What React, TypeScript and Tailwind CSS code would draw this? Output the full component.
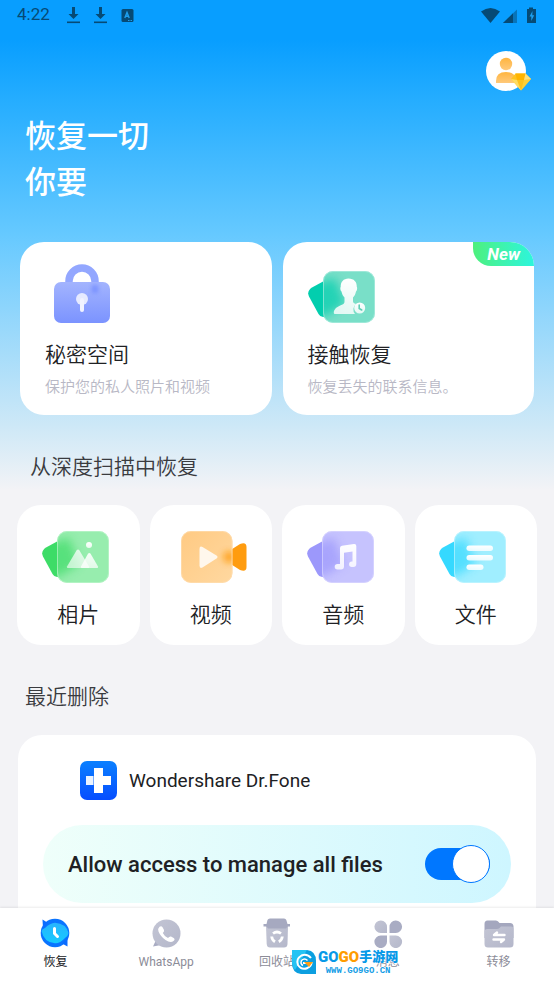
import type { ReactNode } from "react"

type PlateProps = {
  id: string
  back: string
  front: string
  edge: string
  children: ReactNode
}

function PlateIcon({ id, back, front, edge, children }: PlateProps) {
  const shape = "M16 10 L4 16.5 Q-1.5 20 1 25.5 L10.500 43 Q12.500 46.500 16 46 L37 33 L27 7 Z"
  return (
    <svg width="73" height="52" viewBox="0 0 73 52" aria-hidden="true">
      <defs>
        <clipPath id={`${id}-clip`}>
          <rect x="15" width="52" height="52" rx="10" />
        </clipPath>
        <filter id={`${id}-blur`} x="-50%" y="-50%" width="200%" height="200%">
          <feGaussianBlur stdDeviation="5" />
        </filter>
        <linearGradient id={`${id}-glyph`} x1="0" y1="0" x2="0" y2="1">
          <stop offset="0" stopColor="#fff" />
          <stop offset="1" stopColor="#fff" stopOpacity="0.8" />
        </linearGradient>
      </defs>
      <path d={shape} fill={back} />
      <g clipPath={`url(#${id}-clip)`}>
        <rect x="15" width="52" height="52" fill={front} />
        <path d={shape} fill={back} opacity="0.7" filter={`url(#${id}-blur)`} />
      </g>
      <rect x="15.500" y="0.500" width="51" height="51" rx="9.500" fill="none" stroke={edge} strokeOpacity="0.6" />
      <g fill={`url(#${id}-glyph)`}>{children}</g>
    </svg>
  )
}

function LockIcon() {
  return (
    <svg width="67" height="59" viewBox="-9 0 67 59" aria-hidden="true">
      <defs>
        <linearGradient id="lock-body" x1="0" y1="0" x2="0" y2="1">
          <stop offset="0" stopColor="#a3b4fe" />
          <stop offset="1" stopColor="#7b93ff" />
        </linearGradient>
        <filter id="lock-blur" x="-10" y="10" width="70" height="40" filterUnits="userSpaceOnUse">
          <feGaussianBlur stdDeviation="2" />
        </filter>
      </defs>
      <path d="M15 24 V17 a13 13 0 0 1 26 0 V24" fill="none" stroke="#93a7ff" strokeWidth="7.500" />
      <rect y="18" width="56" height="41" rx="7" fill="url(#lock-body)" />
      <path d="M41 21 v8" stroke="#6f89ff" strokeWidth="6" opacity="0.8" filter="url(#lock-blur)" />
      <circle cx="28" cy="35" r="6" fill="#e6eaff" />
      <path d="M28 36 V46" stroke="#f1f3ff" strokeWidth="4" strokeLinecap="round" />
    </svg>
  )
}

function ContactIcon() {
  return (
    <PlateIcon id="contact" back="#02ceae" front="#79dfc8" edge="#b5efe3">
      <path d="M40.500 7.500 c5.500 0 8.500 3.500 8.300 8.500 c.6 .3 .5 3.500 -.8 4.500 c-.5 2.500 -1.500 4.500 -3 6 v4 c.3 1.500 1.500 2 3 2.500 a7 7 0 0 0 -1 10 H27 c-1.500 0 -1.500 -2.500 -.5 -4 c1.500 -3 5 -4 8 -5.500 c1.500 -.8 2 -1.500 2 -3 v-4 c-1.500 -1.500 -2.500 -3.500 -3 -6 c-1.300 -1 -1.400 -4.200 -.8 -4.500 c-.2 -5 2.800 -8.500 7.800 -8.500 Z" />
      <circle cx="51.700" cy="37" r="5.500" />
      <path d="M51.200 34 v3.500 l2.500 1.500" fill="none" stroke="#5fcdb4" strokeWidth="1.600" strokeLinecap="round" />
    </PlateIcon>
  )
}

function PhotoIcon() {
  return (
    <PlateIcon id="photo" back="#3ddc67" front="#97edae" edge="#c4f7d0">
      <path d="M34.500 19.500 q1.500 -2 3 0 l9.500 16 q.5 1.500 -1 1.500 H26 q-1.500 0 -1 -1.500 Z" opacity="0.75" />
      <path d="M46 22.800 q1.300 -1.800 2.600 0 L56 35.500 q.5 1.500 -1 1.500 H40 q-1.500 0 -1 -1.500 Z" opacity="0.9" />
      <circle cx="47" cy="14" r="3" />
    </PlateIcon>
  )
}

function VideoIcon() {
  return (
    <svg width="75" height="52" viewBox="-8 0 75 52" aria-hidden="true">
      <defs>
        <linearGradient id="video-front" x1="0" y1="0" x2="1" y2="1">
          <stop offset="0" stopColor="#ffca83" />
          <stop offset="1" stopColor="#ffd8a0" />
        </linearGradient>
        <clipPath id="video-clip">
          <rect width="51.500" height="52" rx="10" />
        </clipPath>
        <filter id="video-blur" x="-50%" y="-50%" width="200%" height="200%">
          <feGaussianBlur stdDeviation="3" />
        </filter>
      </defs>
      <path d="M45 22 L59 13 Q65.500 10.500 65.500 16 V36 Q65.500 41.500 59 39 L45 30 Z" fill="#ff9c0f" />
      <g clipPath="url(#video-clip)">
        <rect width="52" height="52" fill="url(#video-front)" />
        <circle cx="48" cy="26" r="6" fill="#ff9c0f" opacity="0.8" filter="url(#video-blur)" />
      </g>
      <rect x="0.500" y="0.500" width="50.500" height="51" rx="9.500" fill="none" stroke="#ffe0b5" strokeOpacity="0.6" />
      <path d="M18.500 18 Q18.500 14.500 21.500 16 L35.500 24.500 Q37.500 26 35.500 27.500 L21.500 36.500 Q18.500 38 18.500 34.500 Z" fill="#fff7ec" />
    </svg>
  )
}

function MusicIcon() {
  return (
    <PlateIcon id="music" back="#9c98fb" front="#c6c3fe" edge="#dddbff">
      <path d="M33 17 q0 -2 2 -2.300 l12 -1.700 q2.300 -.2 2.300 2 V33 q0 3 -3 3 h-1.500 a2.700 2.700 0 0 1 0 -5.400 H45.500 V20.500 L37 21.800 V35.500 q0 3 -3 3 h-3.500 a2.800 2.800 0 0 1 0 -5.600 H33 Z" />
    </PlateIcon>
  )
}

function FileIcon() {
  return (
    <PlateIcon id="file" back="#35d9ff" front="#a0eeff" edge="#c9f6ff">
      <rect x="27.500" y="14.500" width="26.500" height="5.500" rx="2.700" />
      <rect x="27.500" y="24" width="26.500" height="5.500" rx="2.700" />
      <rect x="27.500" y="33.500" width="17" height="5.500" rx="2.700" />
    </PlateIcon>
  )
}

function DownloadGlyph() {
  return (
    <svg width="13" height="17" viewBox="0 0 13 17" fill="#064a75" aria-hidden="true">
      <path d="M5 0 h3 v7 h3.500 L6.500 12 L1.500 7 H5 Z" />
      <rect y="14.500" width="13" height="1.600" />
    </svg>
  )
}

function StatusBar() {
  return (
    <div className="flex h-8 items-center justify-between pr-[18px] pb-[2px] pl-[17px] text-[#064a75]">
      <div className="flex items-center gap-[17px]">
        <span className="text-[17px]">4:22</span>
        <div className="flex items-center gap-[14px]">
          <DownloadGlyph />
          <DownloadGlyph />
          <svg width="13" height="13" viewBox="0 0 13 13" aria-hidden="true">
            <rect x="0.500" width="12" height="13" rx="1.500" fill="#064a75" />
            <path d="M3.800 9 L6 3.500 L8.200 9 M4.500 7.300 h3" fill="none" stroke="#1d9fee" strokeWidth="1.400" />
            <path d="M7 11.500 h4" stroke="#1d9fee" strokeDasharray="1 .5" />
          </svg>
        </div>
      </div>
      <svg width="55" height="17" viewBox="0 0 55 17" fill="#064a75" aria-hidden="true">
        <path d="M0 4.500 Q9.500 -2.500 19 4.500 L9.500 16 Z" />
        <path d="M22 16 L36 2.500 V16 Z" opacity="0.5" />
        <path d="M22 16 L32 6.300 V16 Z" />
        <path d="M48 .5 h4 v1.500 h3 V16 h-9 V2 h2 Z" />
        <path d="M51.500 4 L48.500 9.500 h1.800 V14 L53.200 8.200 h-1.900 Z" fill="#1d9fee" />
      </svg>
    </div>
  )
}

function Avatar() {
  return (
    <svg width="45" height="40" viewBox="0 0 45 40" aria-hidden="true">
      <defs>
        <linearGradient id="person" x1="0" y1="0" x2="0" y2="1">
          <stop offset="0" stopColor="#ffb53f" />
          <stop offset="1" stopColor="#ffc97a" />
        </linearGradient>
      </defs>
      <circle cx="20" cy="20" r="20" fill="#fff" />
      <circle cx="20" cy="13" r="6.200" fill="url(#person)" />
      <path d="M10 32 v-2 q0 -9 10 -9 q10 0 10 9 v2 Z" fill="url(#person)" />
      <path d="M29.500 22.500 h10 L45 28 L35 39.500 L25 28 Z" fill="#ffc21e" />
      <path d="M29.500 22.500 h10 L38 29 h-7 Z" fill="#ffb400" />
      <path d="M25 28 L31 29 L35 39.500 Z" fill="#ffdc63" />
      <path d="M45 28 L38 29 L35 39.500 Z" fill="#ffd03a" />
      <path d="M39.500 22.500 L45 28 L38 29 Z" fill="#ffe07a" />
    </svg>
  )
}

function NavGradient({ id }: { id: string }) {
  return (
    <linearGradient id={id} x1="0" y1="0" x2="1" y2="1">
      <stop offset="0" stopColor="#c3c5d4" />
      <stop offset="1" stopColor="#b4b7ca" />
    </linearGradient>
  )
}

function RestoreNavIcon() {
  return (
    <svg width="30" height="30" viewBox="0 0 30 30" aria-hidden="true">
      <defs>
        <linearGradient id="restore" x1="0" y1="0" x2="0" y2="1">
          <stop offset="0" stopColor="#27b4fd" />
          <stop offset="1" stopColor="#16cbff" />
        </linearGradient>
      </defs>
      <circle cx="15" cy="15" r="14.300" fill="#0a74ff" />
      <path d="M2.500 1.500 L8 5 L3 11 Z" fill="#0a6cff" />
      <path d="M27.500 28.500 L22 25.500 L27.500 19 Z" fill="#0a6cff" />
      <path d="M1.500 13 Q2 11 5 10 Q10 5 15 4.800 Q26 5.500 28.500 15 Q28.300 17.500 25 20 Q20 25.500 15 25.300 Q4 24.500 1.500 13 Z" fill="url(#restore)" />
      <path d="M14.500 10.500 V15.500 L17.500 18.500" fill="none" stroke="#fff" strokeWidth="3" strokeLinecap="round" />
    </svg>
  )
}

function WhatsAppNavIcon() {
  return (
    <svg width="30" height="30" viewBox="0 0 30 30" aria-hidden="true">
      <defs>
        <NavGradient id="wa" />
      </defs>
      <path d="M2 28.500 L5 22 L10 27 Z" fill="#a9acc3" />
      <circle cx="15.500" cy="15.500" r="14" fill="url(#wa)" />
      <path d="M8.500 8.800 Q10.500 7.500 11.700 9.500 L13 12 Q13.500 13.500 11.800 15 Q13.500 18.500 17 20 Q18.500 18 20 18.500 L22.700 20 Q24.500 21.500 22.500 23 Q19.500 25.300 14.500 22 Q9.500 18.500 7.500 13.500 Q6.500 10.500 8.500 8.800 Z" fill="#fff" />
    </svg>
  )
}

function TrashNavIcon() {
  return (
    <svg width="30" height="30" viewBox="0 0 30 30" aria-hidden="true">
      <defs>
        <NavGradient id="trash" />
      </defs>
      <path d="M4 8 H26 L25.500 26 Q25.300 29.500 22 29.500 H8 Q5 29.500 4.700 26 Z" fill="url(#trash)" />
      <path d="M4.500 6 L5.500 2 Q6 .5 8 .5 H22 Q23.800 .5 24.300 2 L25.500 6 H28 V8.500 H25.500 L24 10.500 H6 L4.500 8.500 H1.500 V6 Z" fill="#a6a9c0" />
      <path d="M11 15.500 Q15 12.500 19 15.500 M20.300 18.500 Q20 22 16.800 23.800 M9.700 18.500 Q10 22 13 23.800" fill="none" stroke="#fff" strokeWidth="2.800" />
    </svg>
  )
}

function AppsNavIcon() {
  return (
    <svg width="30" height="30" viewBox="0 0 30 30" fill="url(#apps)" aria-hidden="true">
      <defs>
        <NavGradient id="apps" />
      </defs>
      <path d="M14 15 V9 a6.300 6.300 0 1 0 -6.300 6 Z" />
      <path d="M16.500 15 V9 a6.300 6.300 0 1 1 6.300 6 Z" fill="#a9acc3" />
      <path d="M14 17.500 V23.500 a6.300 6.300 0 1 1 -6.300 -6 Z" fill="#a9acc3" />
      <path d="M16.500 17.500 V23.500 a6.300 6.300 0 1 0 6.300 -6 Z" />
    </svg>
  )
}

function TransferNavIcon() {
  return (
    <svg width="30" height="30" viewBox="0 0 30 30" aria-hidden="true">
      <defs>
        <NavGradient id="transfer" />
      </defs>
      <path d="M.5 6 Q.5 2.500 3.500 2.500 H12 Q14 2.500 15.500 5 H26 Q29 5 29.500 8 V20 H.5 Z" fill="#a4a7be" />
      <path d="M.5 13.500 Q.5 11 3.500 11 H13 Q15 11 17 8.500 H27 Q29.500 8.500 29.500 11 V26 Q29.500 29.500 26 29.500 H4 Q.5 29.500 .5 26 Z" fill="url(#transfer)" />
      <path d="M10 17 H20.500 M10.500 16.500 L13 14.500 M20 21.500 H9.500 M19.500 22 L17 24" fill="none" stroke="#fff" strokeWidth="2.400" strokeLinecap="round" />
    </svg>
  )
}

const features = [
  { title: "秘密空间", description: "保护您的私人照片和视频", icon: <LockIcon />, isNew: false },
  { title: "接触恢复", description: "恢复丢失的联系信息。", icon: <ContactIcon />, isNew: true },
]

const scans = [
  { label: "相片", icon: <PhotoIcon /> },
  { label: "视频", icon: <VideoIcon /> },
  { label: "音频", icon: <MusicIcon /> },
  { label: "文件", icon: <FileIcon /> },
]

const tabs = [
  { label: "恢复", icon: <RestoreNavIcon />, active: true },
  { label: "WhatsApp", icon: <WhatsAppNavIcon />, active: false },
  { label: "回收站", icon: <TrashNavIcon />, active: false },
  { label: "消息", icon: <AppsNavIcon />, active: false },
  { label: "转移", icon: <TransferNavIcon />, active: false },
]

function Watermark() {
  return (
    <div className="pointer-events-none absolute top-10 left-1/2 ml-[15px] flex items-center gap-[2px]">
      <svg width="24" height="24" viewBox="0 0 24 24" aria-hidden="true">
        <path d="M0 0 H15 Q24 1 24 11 V24 H9 Q0 23 0 13 Z" fill="#0c9fe0" />
        <path d="M0 0 H15 L3 20 Q0 17 0 13 Z" fill="#25c3f3" />
        <path d="M19 8 Q15 3 9.500 5.500 Q3.500 9 6 15 Q9.500 20.500 15.500 18 Q19 16 19.500 13 H11" fill="none" stroke="#fff" strokeWidth="2" />
        <path d="M15.500 10.500 Q12.500 7.500 9.500 10.500 Q8 14 11 15.500" fill="none" stroke="#fff" strokeWidth="1.500" />
        <path d="M12 12 H21 L17 17 Z" fill="#ff9d14" />
      </svg>
      <div className="flex flex-col items-center font-bold [text-shadow:0_0_2px_#fff,0_0_2px_#fff]">
        <span className="flex items-center leading-[18px] font-black whitespace-nowrap text-[#0799e8]">
          <span className="text-[15px]">GO</span>
          <span className="text-[15px] text-[#ff9c00]">GO</span>
          <span className="text-[13px]">手游网</span>
        </span>
        <span className="font-['Liberation_Mono',monospace] text-[9px] leading-[10px] text-[#169ee6]">WWW.GO9GO.CN</span>
      </div>
    </div>
  )
}

export default function App() {
  return (
    <div className="flex h-screen flex-col overflow-hidden bg-[#f3f3f6] font-[Roboto,'Noto_Sans_CJK_SC',sans-serif] text-[#202124]">
      <main className="min-h-0 flex-1 overflow-hidden bg-[linear-gradient(to_bottom,#089eff_0px,#089eff_40px,#25adff_100px,#66c9ff_235px,#cde8f7_425px,#f3f3f6_490px)]">
        <StatusBar />
        <header className="pr-[23px] pl-[25px]">
          <div className="flex justify-end pt-[19px]">
            <button type="button" aria-label="Account">
              <Avatar />
            </button>
          </div>
          <h1 className="mt-[23px] text-[31px] leading-[46px] font-medium text-white">
            恢复一切
            <br />
            你要
          </h1>
        </header>

        <div className="mt-9 grid grid-cols-2 gap-[11px] px-5">
          {features.map((item) => (
            <button
              key={item.title}
              type="button"
              className="relative overflow-hidden rounded-[24px] bg-white px-[25px] pt-[22px] pb-4 text-left"
            >
              <span className="flex h-[59px] items-end">{item.icon}</span>
              <span className="mt-4 block text-[21px] leading-8 font-[350]">{item.title}</span>
              <span className="mt-1 block text-[15px] leading-6 font-[350] whitespace-nowrap text-[#b8b8c5]">{item.description}</span>
              {item.isNew && (
                <span className="absolute top-0 right-0 rounded-bl-[18px] bg-linear-to-r from-[#4df07c] to-[#2cf5dc] px-[14px] text-[17px] leading-6 font-bold text-white italic">
                  New
                </span>
              )}
            </button>
          ))}
        </div>

        <section>
          <h2 className="mt-9 mb-[22px] px-[30px] text-[21px] leading-8 font-[350] text-[#3a3b3f]">从深度扫描中恢复</h2>
          <div className="grid grid-cols-4 gap-[10px] px-[17px]">
            {scans.map((item) => (
              <button
                key={item.label}
                type="button"
                className="flex flex-col items-center rounded-[24px] bg-white pt-[26px] pb-[14px]"
              >
                {item.icon}
                <span className="mt-4 text-[21px] leading-8 font-[350]">{item.label}</span>
              </button>
            ))}
          </div>
        </section>

        <section>
          <h2 className="mt-9 mb-[22px] px-[25px] text-[21px] leading-8 font-[350] text-[#3a3b3f]">最近删除</h2>
          <div className="mx-[18px] rounded-t-[24px] bg-white px-[25px] pt-[26px] pb-6">
            <div className="flex items-center gap-3 pl-[37px]">
              <svg width="37" height="39" viewBox="0 0 37 39" aria-hidden="true">
                <defs>
                  <linearGradient id="fone" x1="0" y1="0" x2="0" y2="1">
                    <stop offset="0" stopColor="#0a80ff" />
                    <stop offset="1" stopColor="#064dff" />
                  </linearGradient>
                </defs>
                <rect width="37" height="39" rx="7" fill="url(#fone)" />
                <path d="M14 7 h9 v8 h8 v9 h-8 v8 h-9 Z" fill="#fff" />
                <path d="M6 15 h7.500 v9 H6 Z" fill="#eaf3ff" />
              </svg>
              <span className="text-[19px] leading-8">Wondershare Dr.Fone</span>
            </div>
            <label className="mt-[25px] flex h-[78px] items-center justify-between rounded-full bg-linear-to-r from-[#effffa] to-[#cef6ff] pr-[21px] pl-[25px]">
              <span className="text-[22px] font-medium">Allow access to manage all files</span>
              <span className="relative flex items-center">
                <input
                  type="checkbox"
                  defaultChecked
                  className="peer h-8 w-[65px] appearance-none rounded-full bg-[#b9bdc9] checked:bg-[#0077ff]"
                />
                <span className="pointer-events-none absolute left-0 size-[38px] rounded-full border border-[#0077ff] bg-white peer-checked:right-0 peer-checked:left-auto" />
              </span>
            </label>
          </div>
        </section>
      </main>

      <nav className="relative grid grid-cols-5 bg-white pt-[10px] pb-3 shadow-[0_-1px_2px_rgba(0,0,0,0.08)]">
        {tabs.map((tab) => (
          <a
            key={tab.label}
            href="#"
            aria-current={tab.active ? "page" : undefined}
            className="flex flex-col items-center gap-1 text-[12px] leading-5 text-[#8c8c98] aria-[current=page]:text-[#202124]"
          >
            {tab.icon}
            {tab.label}
          </a>
        ))}
        <Watermark />
      </nav>
    </div>
  )
}
